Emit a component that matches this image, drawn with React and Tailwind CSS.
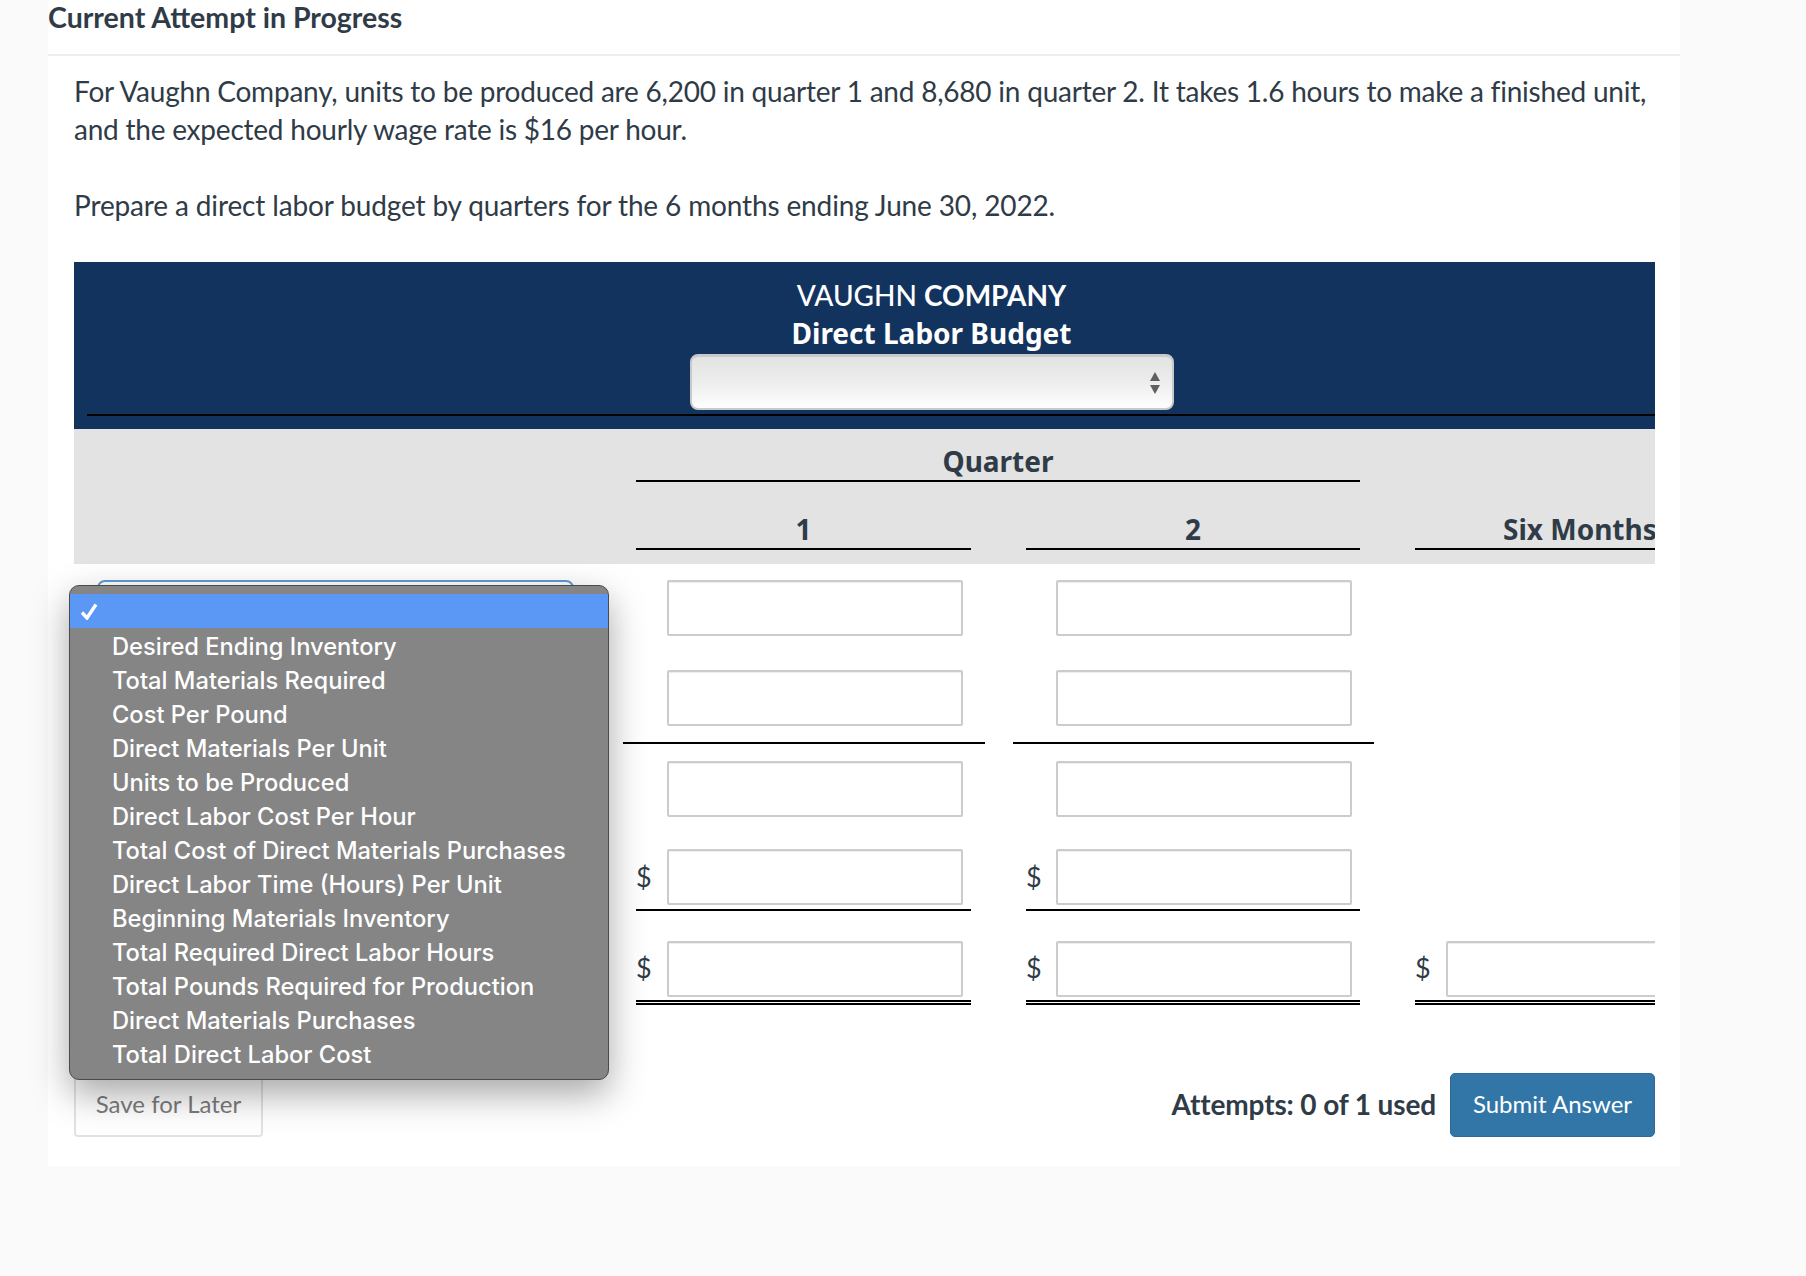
const options = [
  "Desired Ending Inventory",
  "Total Materials Required",
  "Cost Per Pound",
  "Direct Materials Per Unit",
  "Units to be Produced",
  "Direct Labor Cost Per Hour",
  "Total Cost of Direct Materials Purchases",
  "Direct Labor Time (Hours) Per Unit",
  "Beginning Materials Inventory",
  "Total Required Direct Labor Hours",
  "Total Pounds Required for Production",
  "Direct Materials Purchases",
  "Total Direct Labor Cost",
];

const Arrows = () => (
  <svg width="12" height="24" viewBox="0 0 12 24" className="fill-[#5f5f5f]">
    <path d="M6 1l5 9H1z" />
    <path d="M6 23l5-9H1z" />
  </svg>
);

const AmountCell = ({ dollar, line, inputLeft = "w-[31px]" }) => (
  <div className="relative">
    <div
      className={`flex w-full items-start ${line === "single" ? "h-[62px] border-b-2 border-black" : ""} ${line === "double" ? "h-[64px] border-b-[5px] border-double border-black" : ""} ${!line || line === "wide" ? "h-[60px]" : ""}`}
    >
      <span className={`shrink-0 text-[27px] leading-[36px] text-[#2f3b47] ${line === "double" ? "pt-[9px]" : "pt-[10px]"} ${inputLeft}`}>{dollar ? "$" : ""}</span>
      <input className="h-[56px] w-[296px] shrink-0 rounded-[2px] border-2 border-[#cccccc] bg-white shadow-[inset_0_1px_1px_rgba(0,0,0,0.075)]" />
    </div>
    {line === "wide" && <div className="absolute top-[72px] -left-[13px] -right-[14px] h-[2px] bg-black" />}
  </div>
);

const Row = ({ className, dollar, line, total }) => (
  <div className={`grid grid-cols-[507px_335px_334px_240px] gap-x-[55px] ${className}`}>
    <div className="pl-[23px]">
      <select className="h-[56px] w-[477px] rounded-[8px] border-2 border-[#5f9bd4] bg-white" />
    </div>
    <AmountCell dollar={dollar} line={line} />
    <AmountCell dollar={dollar} line={line} inputLeft="w-[30px]" />
    <div className="overflow-hidden">{total && <AmountCell dollar line="double" />}</div>
  </div>
);

export default function App() {
  return (
    <div className="h-[1276px] w-full overflow-hidden bg-[#fafafa] font-['Lato',sans-serif] text-[#2f3b47]">
      <div className="ml-[48px] flex h-[1166px] w-[1632px] flex-col bg-white">
        <div className="h-[56px] border-b-2 border-[#eeeeee]">
          <h2 className="text-[28.5px] leading-[34px] font-bold">Current Attempt in Progress</h2>
        </div>

        <div className="px-[26px] pt-[16px]">
          <p className="text-[28px] leading-[38px] tracking-[-0.22px]">
            For Vaughn Company, units to be produced are 6,200 in quarter 1 and 8,680 in quarter 2. It takes 1.6 hours to make a finished unit, and the expected hourly wage rate is $16 per hour.
          </p>
          <p className="mt-[38px] text-[28px] leading-[38px] tracking-[-0.14px]">
            Prepare a direct labor budget by quarters for the 6 months ending June 30, 2022.
          </p>

          <div className="mt-[38px] w-[1581px]">
            <div className="relative flex h-[167px] flex-col items-center bg-[#13335f] pt-[14px] pl-[134px] text-[28px] leading-[38px] text-white">
              <div className="font-medium">
                VAUGHN <span className="font-bold">COMPANY</span>
              </div>
              <div className="font-['Noto_Sans',sans-serif] text-[28px] font-bold">Direct Labor Budget</div>
              <div className="relative z-10 mt-[2px] flex h-[56px] w-[484px] items-center justify-end rounded-[8px] border-2 border-t-[3px] border-[#c9c9c9] bg-linear-to-b from-[#e3e3e3] via-[#ededed] to-white pr-[11px]">
                <Arrows />
              </div>
              <div className="absolute top-[152px] right-0 left-[13px] h-[2px] bg-black" />
            </div>

            <div className="grid h-[135px] grid-cols-[507px_335px_334px_240px] gap-x-[55px] bg-[#e3e3e3] font-['Noto_Sans',sans-serif] text-[28px] leading-[36px] font-bold">
              <div className="col-span-2 col-start-2 h-[53px] border-b-2 border-black pt-[14px] text-center">Quarter</div>
              <div className="col-start-2 -mt-[13px] h-[67px] border-b-2 border-black pt-[28px] text-center">1</div>
              <div className="-mt-[13px] h-[67px] border-b-2 border-black pt-[28px] text-center">2</div>
              <div className="-mt-[13px] h-[67px] overflow-hidden border-b-2 border-black pt-[28px] pl-[88px] whitespace-nowrap">Six Months</div>
            </div>

            <div className="relative pt-[16px]">
              <Row />
              <Row className="mt-[30px]" line="wide" />
              <Row className="mt-[31px]" />
              <Row className="mt-[28px]" dollar line="single" />
              <Row className="mt-[30px]" dollar line="double" total />

              <div className="absolute top-[21px] -left-[5px] z-20 w-[540px] overflow-hidden rounded-[10px] border border-[#4a4a4a] bg-[#858585] pt-[8px] pb-[7px] font-['Inter',sans-serif] text-[23.7px] leading-[34px] font-medium text-white shadow-[0_14px_36px_rgba(0,0,0,0.35)]">
                <div className="flex h-[34px] items-center bg-[#5b98f5] pl-[10px]">
                  <svg width="18" height="17" viewBox="0 0 18 17" fill="none" stroke="white" strokeWidth="3.4">
                    <path d="M2 9.5l5 5.5L16 1.5" />
                  </svg>
                </div>
                <ul className="pt-[2px]">
                  {options.map((o) => (
                    <li key={o} className="pl-[42px] whitespace-nowrap">
                      {o}
                    </li>
                  ))}
                </ul>
              </div>
            </div>

            <div className="mt-[68px] flex items-center justify-between">
              <button className="h-[64px] w-[189px] rounded-[4px] border-2 border-[#e2e2e2] bg-white pb-[2px] text-[24px] text-[#7b7b7b]">
                Save for Later
              </button>
              <div className="flex items-center gap-[14px]">
                <span className="pb-[3px] text-[28px] font-bold tracking-[-0.13px]">Attempts: 0 of 1 used</span>
                <button className="h-[64px] w-[205px] rounded-[5px] border border-[#2c6a99] bg-[#3276a8] pb-[2px] text-[24px] text-white">
                  Submit Answer
                </button>
              </div>
            </div>
          </div>
        </div>
      </div>
    </div>
  );
}
